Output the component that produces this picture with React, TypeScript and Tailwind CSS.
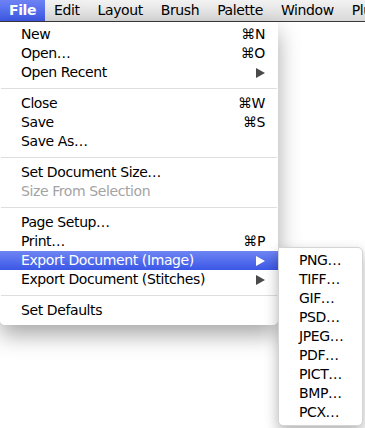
type Item =
  | { kind: "sep" }
  | { kind: "item"; label: string; shortcut?: string; sub?: boolean; disabled?: boolean; active?: boolean };

const items: Item[] = [
  { kind: "item", label: "New", shortcut: "⌘N" },
  { kind: "item", label: "Open…", shortcut: "⌘O" },
  { kind: "item", label: "Open Recent", sub: true },
  { kind: "sep" },
  { kind: "item", label: "Close", shortcut: "⌘W" },
  { kind: "item", label: "Save", shortcut: "⌘S" },
  { kind: "item", label: "Save As…" },
  { kind: "sep" },
  { kind: "item", label: "Set Document Size…" },
  { kind: "item", label: "Size From Selection", disabled: true },
  { kind: "sep" },
  { kind: "item", label: "Page Setup…" },
  { kind: "item", label: "Print…", shortcut: "⌘P" },
  { kind: "item", label: "Export Document (Image)", sub: true, active: true },
  { kind: "item", label: "Export Document (Stitches)", sub: true },
  { kind: "sep" },
  { kind: "item", label: "Set Defaults" },
];

const formats = ["PNG…", "TIFF…", "GIF…", "PSD…", "JPEG…", "PDF…", "PICT…", "BMP…", "PCX…"];

const barItems = ["Edit", "Layout", "Brush", "Palette", "Window", "Plugins"];

function Arrow({ white }: { white?: boolean }) {
  return (
    <svg width="9" height="10" viewBox="0 0 9 10" className="shrink-0">
      <path d="M0 0 L9 5 L0 10 Z" fill={white ? "#ffffff" : "#4a4a4a"} />
    </svg>
  );
}

function Submenu() {
  return (
    <div className="absolute left-[278px] top-[-4px] w-[85px] bg-white rounded-b-[5px] rounded-tr-[5px] border border-[#d4d4d4] shadow-[0_6px_14px_rgba(0,0,0,0.3)] py-[3px]">
      {formats.map((f) => (
        <div key={f} className="h-[19px] flex items-center pl-[20px] text-[14px] tracking-[-0.4px] text-black">
          {f}
        </div>
      ))}
    </div>
  );
}

export default function App() {
  return (
    <div
      className="relative w-[365px] h-[428px] overflow-hidden bg-white"
      style={{ fontFamily: '"DejaVu Sans", "Liberation Sans", sans-serif' }}
    >
      <div className="h-[22px] flex items-stretch bg-gradient-to-b from-[#f2f2f2] to-[#d9d9d9] border-b border-[#3a3a3a] whitespace-nowrap tracking-[-0.4px] text-[14px]">
        <div className="px-[9px] flex items-center bg-gradient-to-b from-[#6d82f3] to-[#3e58e6] text-white font-bold">
          File
        </div>
        {barItems.map((b) => (
          <div key={b} className="px-[9px] flex items-center text-black">
            {b}
          </div>
        ))}
      </div>

      <div className="absolute left-0 top-[22px] w-[278px] bg-white/95 rounded-b-[5px] shadow-[0_10px_22px_rgba(0,0,0,0.35)] pt-[3px] pb-[5px]">
        {items.map((it, i) =>
          it.kind === "sep" ? (
            <div key={i} className="h-[12px] flex items-center px-[1px]">
              <div className="h-px w-full bg-[#dedede]" />
            </div>
          ) : (
            <div
              key={i}
              className={
                "relative h-[19px] flex items-center pl-[21px] pr-[13px] text-[14px] tracking-[-0.4px] " +
                (it.active
                  ? "bg-gradient-to-b from-[#6f85f3] to-[#3b56e6] text-white"
                  : it.disabled
                  ? "text-[#a3a3a3]"
                  : "text-black")
              }
            >
              <span className="flex-1 whitespace-nowrap">{it.label}</span>
              {it.shortcut && <span>{it.shortcut}</span>}
              {it.sub && <Arrow white={it.active} />}
              {it.active && <Submenu />}
            </div>
          )
        )}
      </div>
    </div>
  );
}
